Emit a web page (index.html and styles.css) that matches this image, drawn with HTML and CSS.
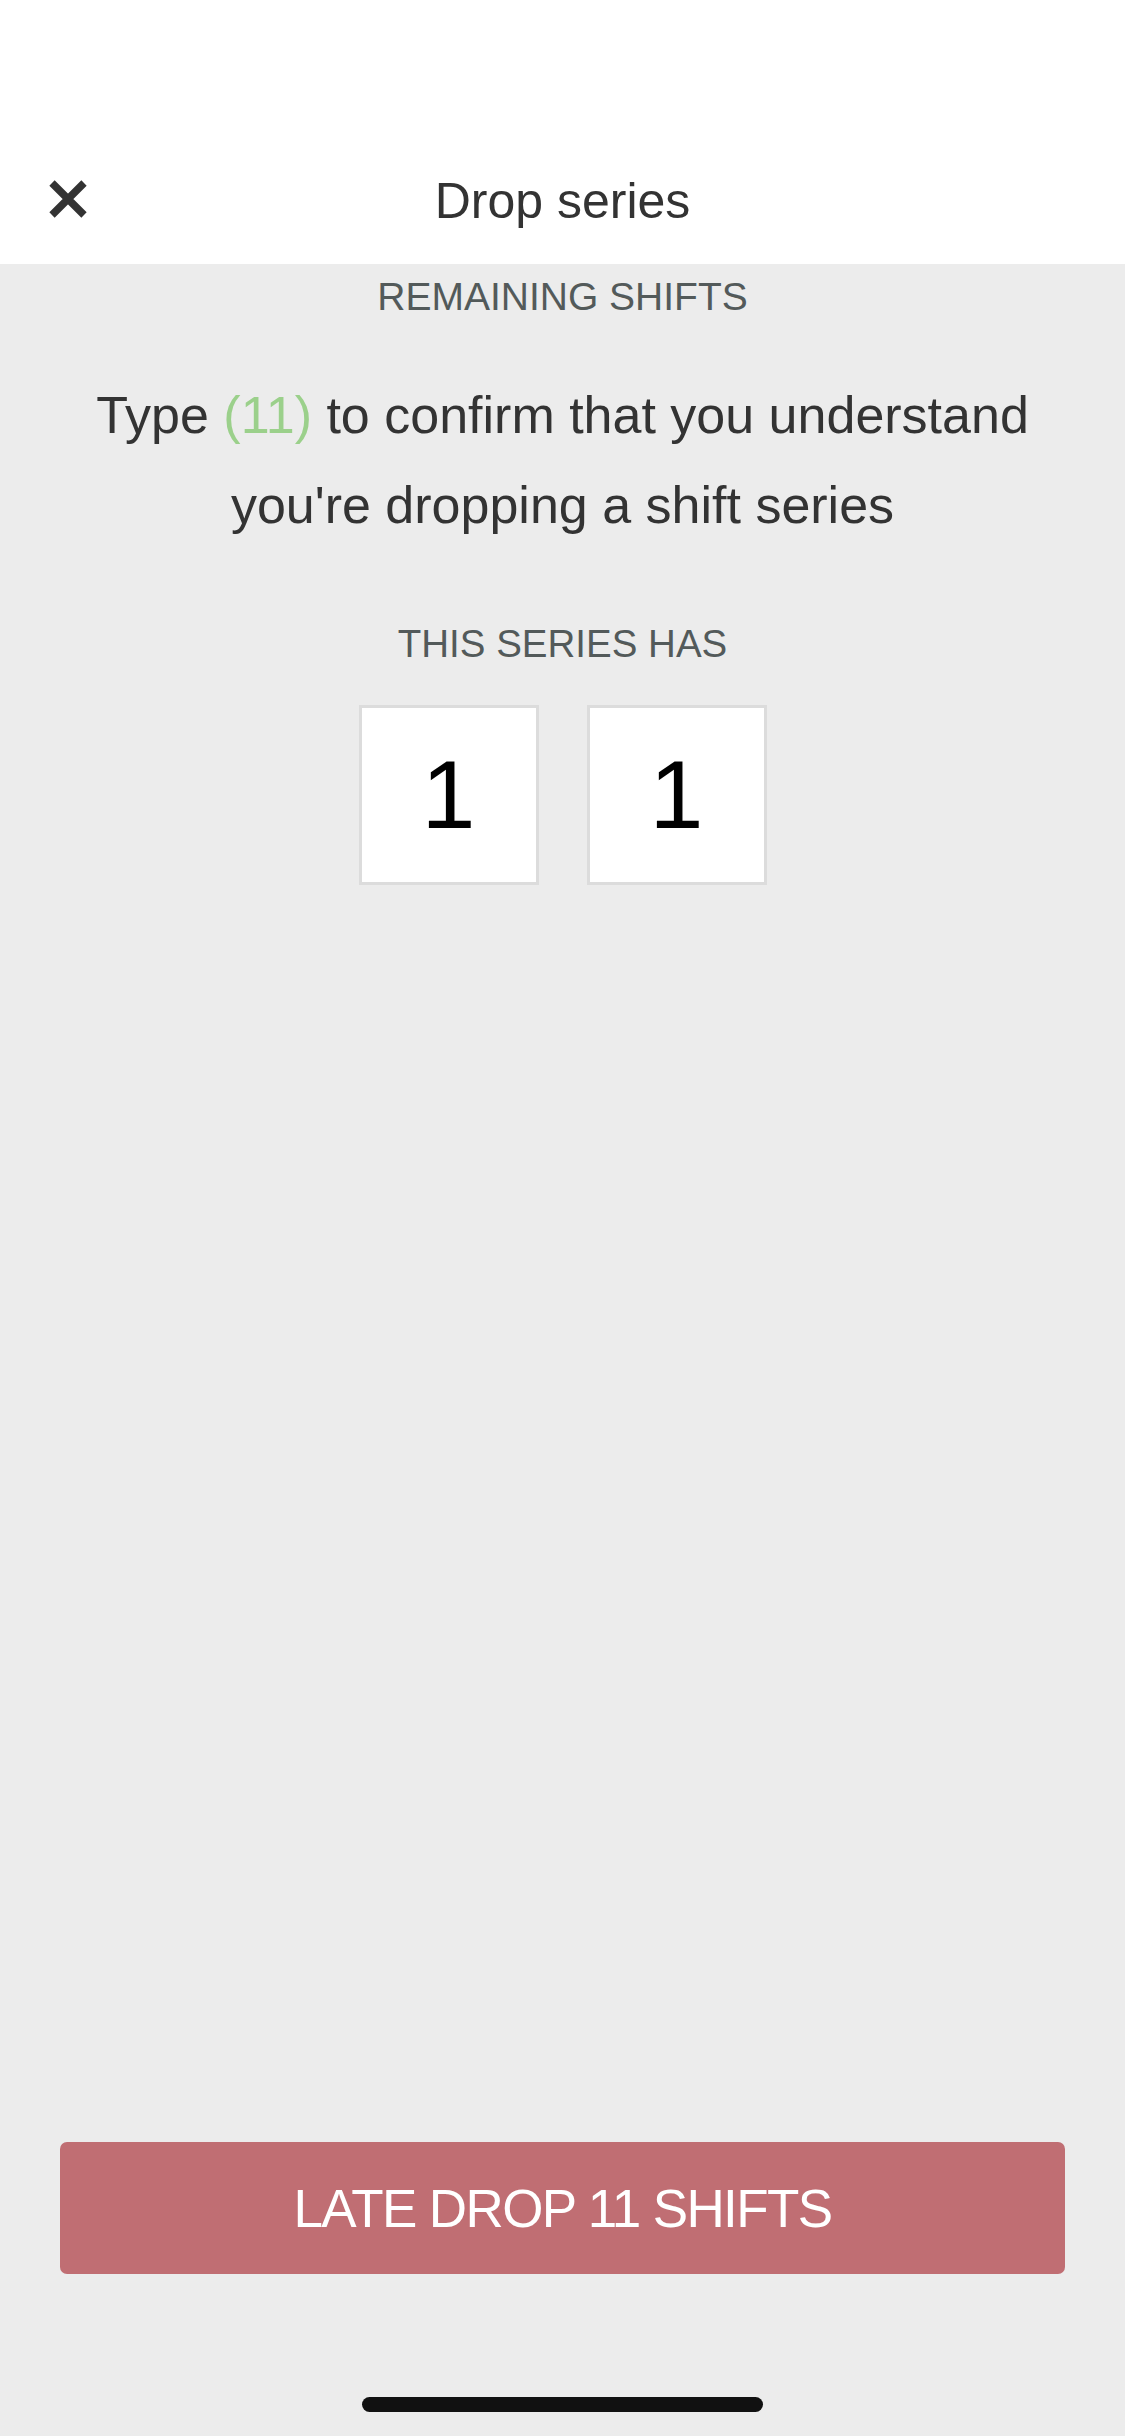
FILE: index.html
```html
<!DOCTYPE html>
<html lang="en">
<head>
<meta charset="utf-8">
<title>Drop series</title>
<link rel="stylesheet" href="styles.css">
</head>
<body>
<div class="screen">
  <header class="header">
    <button class="close" aria-label="Close">
      <svg viewBox="0 0 42 42" width="42" height="42">
        <path d="M5 5 L37 37 M37 5 L5 37" stroke="#333333" stroke-width="7.5" stroke-linecap="butt" fill="none"/>
      </svg>
    </button>
    <h1 class="title">Drop series</h1>
    <span class="spacer"></span>
  </header>
  <main class="content">
    <div class="label label-top">REMAINING SHIFTS</div>
    <p class="message">Type <span class="count">(11)</span> to confirm that you understand you're dropping a shift series</p>
    <div class="label label-series">THIS SERIES HAS</div>
    <div class="digits">
      <div class="digit">1</div>
      <div class="digit">1</div>
    </div>
  </main>
  <div class="footer">
    <button class="drop-btn">LATE DROP 11 SHIFTS</button>
    <div class="home-indicator"></div>
  </div>
</div>
</body>
</html>
```

FILE: styles.css
```css
* { box-sizing: border-box; }
html, body {
  margin: 0;
  padding: 0;
  background: #ececec;
  font-family: "Liberation Sans", Arial, sans-serif;
}
.screen {
  width: 1125px;
  min-height: 2436px;
  display: flex;
  flex-direction: column;
}
.header {
  height: 264px;
  background: #ffffff;
  display: grid;
  grid-template-columns: 140px 1fr 140px;
  align-items: center;
  padding-top: 134px;
}
.close {
  border: 0;
  background: none;
  padding: 0;
  margin-left: 47px;
  width: 42px;
  height: 42px;
  display: flex;
  align-items: center;
  justify-content: center;
}
.close svg { display: block; }
.title {
  margin: 0;
  text-align: center;
  font-weight: 400;
  font-size: 50px;
  line-height: 60px;
  color: #333333;
  position: relative;
  top: 2px;
}
.content {
  display: flex;
  flex-direction: column;
  align-items: center;
}
.label {
  font-size: 38.5px;
  line-height: 46px;
  color: #535a5a;
}
.label-top { margin-top: 10px; font-size: 39px; }
.message {
  margin: 50px 0 0;
  padding: 0 50px;
  text-align: center;
  font-size: 52px;
  line-height: 90px;
  color: #333333;
}
.count { color: #9bd08b; }
.label-series { margin-top: 71px; }
.digits {
  margin-top: 38px;
  display: flex;
  gap: 48px;
}
.digit {
  width: 180px;
  height: 180px;
  background: #ffffff;
  border: 3px solid #dcdcdc;
  display: flex;
  align-items: center;
  justify-content: center;
  font-size: 97px;
  color: #000000;
}
.footer {
  margin-top: auto;
  display: flex;
  flex-direction: column;
  align-items: center;
  padding-bottom: 24px;
}
.drop-btn {
  width: 1005px;
  height: 132px;
  border: 0;
  border-radius: 7px;
  background: #c06e73;
  color: #ffffff;
  font-family: "Liberation Sans", Arial, sans-serif;
  font-size: 53px;
  letter-spacing: -1.6px;
  display: flex;
  align-items: center;
  justify-content: center;
}
.home-indicator {
  margin-top: 123px;
  width: 401px;
  height: 15px;
  border-radius: 8px;
  background: #111111;
}
```
